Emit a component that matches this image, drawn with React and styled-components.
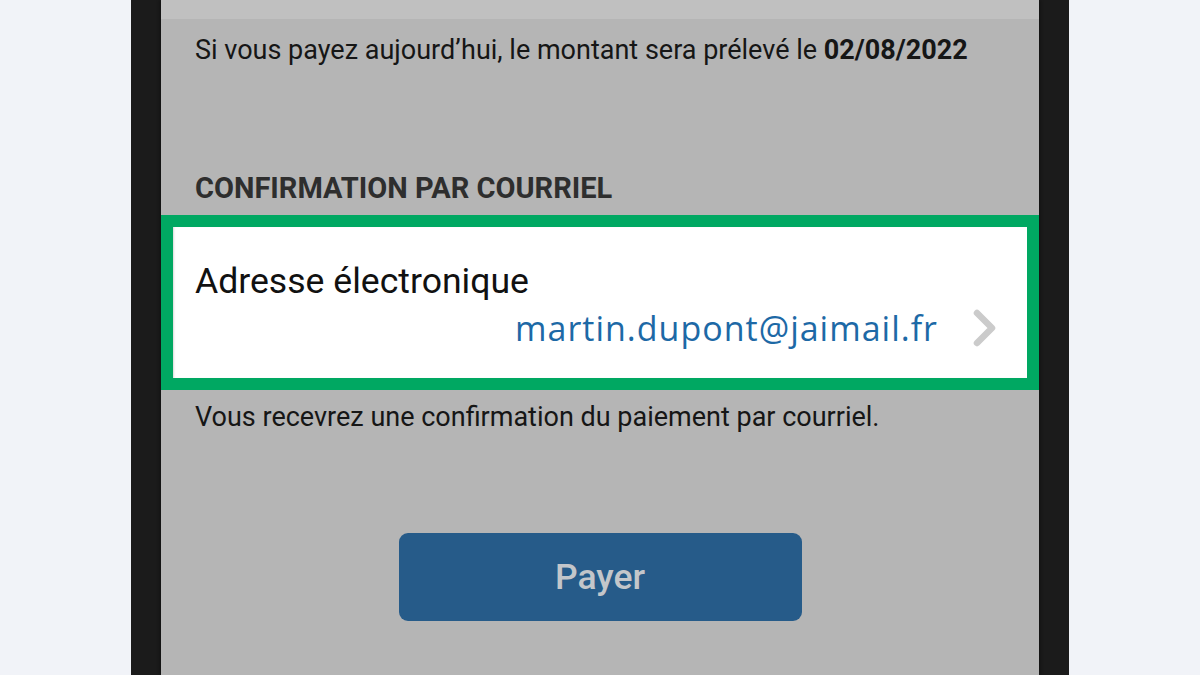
import React from "react";
import styled, { createGlobalStyle } from "styled-components";

const Global = createGlobalStyle`
  html, body { margin: 0; padding: 0; }
  body {
    background: #f1f3f8;
    font-family: Roboto, "Liberation Sans", sans-serif;
    overflow: hidden;
  }
`;

const Page = styled.div`
  height: 675px;
  display: flex;
  justify-content: center;
`;

const Phone = styled.div`
  width: 878px;
  padding: 0 30px;
  background: #1b1b1b;
  display: flex;
`;

const Screen = styled.div`
  flex: 1;
  background: #b5b5b5;
  display: flex;
  flex-direction: column;
  box-shadow: -2px 0 3px rgba(0,0,0,0.25), 2px 0 3px rgba(0,0,0,0.25);
`;

const TopBand = styled.div`
  height: 19px;
  background: #c0c0c0;
`;

const Para = styled.p`
  margin: ${(p) => p.$mt || 0}px 0 0;
  padding: 0 34px;
  font-size: 27px;
  line-height: 32px;
  color: #161616;
  white-space: nowrap;
  b { font-weight: 700; }
`;

const Heading = styled.h2`
  margin: 105px 0 0;
  padding: 0 34px;
  font-size: 29px;
  line-height: 34px;
  font-weight: 700;
  color: #2e2e2e;
`;

const Highlight = styled.div`
  margin-top: 10px;
  border: 12px solid #00a862;
  background: #fff;
  box-shadow: inset 2px 0 2px -1px rgba(0,0,0,0.15);
  padding: 33px 34px 0 22px;
  box-sizing: border-box;
  height: 175px;
  display: flex;
  flex-direction: column;
`;

const FieldLabel = styled.div`
  font-size: 35.6px;
  line-height: 42px;
  color: #111;
`;

const ValueRow = styled.div`
  margin-top: 4px;
  display: flex;
  align-items: center;
  justify-content: flex-end;
  gap: 34px;
`;

const Email = styled.span`
  font-family: "Open Sans", "Liberation Sans", sans-serif;
  font-size: 34px;
  line-height: 44px;
  color: #1d69a6;
  letter-spacing: 1px;
`;

const Chevron = styled.svg`
  width: 26px;
  height: 40px;
  flex: none;
  margin-right: -5px;
`;

const ButtonWrap = styled.div`
  margin-top: 100px;
  display: flex;
  justify-content: center;
`;

const PayButton = styled.button`
  width: 403px;
  height: 88px;
  border: none;
  border-radius: 9px;
  background: #265b89;
  color: #c3c6ca;
  font-family: Roboto, "Liberation Sans", sans-serif;
  font-weight: 500;
  font-size: 35.5px;
  cursor: pointer;
  padding: 0;
`;

export default function App() {
  return (
    <>
      <Global />
      <Page>
        <Phone>
          <Screen>
            <TopBand />
            <Para $mt={15}>
              Si vous payez aujourd’hui, le montant sera prélevé le <b>02/08/2022</b>
            </Para>
            <Heading>CONFIRMATION PAR COURRIEL</Heading>
            <Highlight>
              <FieldLabel>Adresse électronique</FieldLabel>
              <ValueRow>
                <Email>martin.dupont@jaimail.fr</Email>
                <Chevron viewBox="0 0 26 40">
                  <path d="M5 5 L20 20 L5 35" fill="none" stroke="#cbcbcb" strokeWidth="6.5" strokeLinecap="round" strokeLinejoin="round" />
                </Chevron>
              </ValueRow>
            </Highlight>
            <Para $mt={11}>Vous recevrez une confirmation du paiement par courriel.</Para>
            <ButtonWrap>
              <PayButton>Payer</PayButton>
            </ButtonWrap>
          </Screen>
        </Phone>
      </Page>
    </>
  );
}
